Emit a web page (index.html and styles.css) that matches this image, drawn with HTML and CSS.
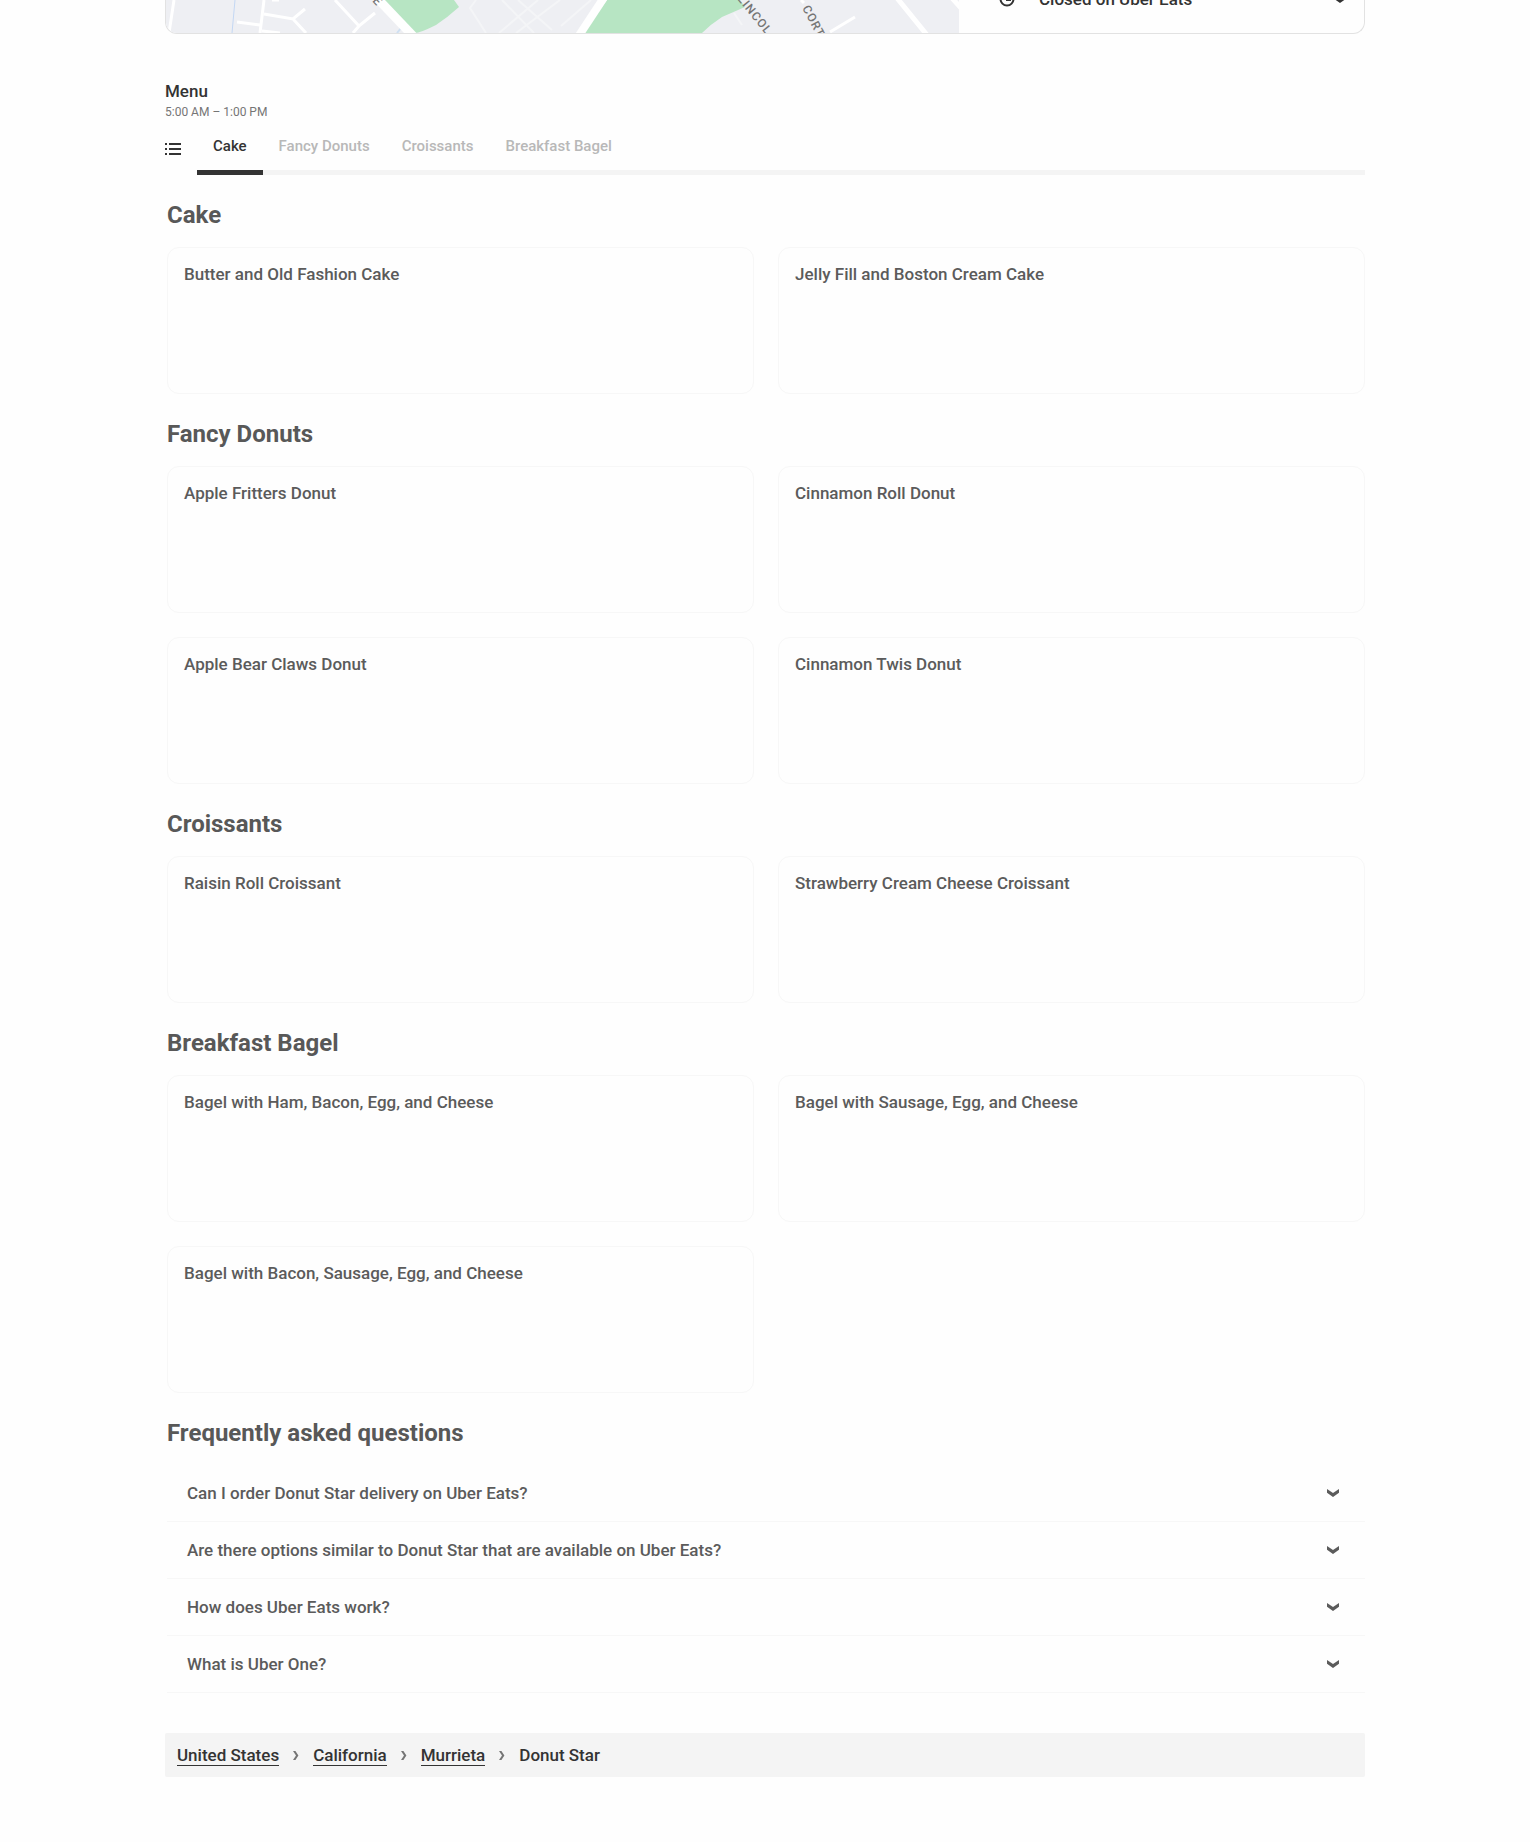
FILE: index.html
```html
<!DOCTYPE html>
<html lang="en">
  <head>
    <meta charset="utf-8">
    <meta name="viewport" content="width=device-width, initial-scale=1">
    <title>Donut Star</title>
    <link rel="stylesheet" href="styles.css">
  </head>
  <body>
    <!-- shared icons -->
    <svg class="sprite" width="0" height="0" aria-hidden="true">
      <symbol id="chevron-down" viewBox="0 0 12 8">
        <path d="M0 0 L6 4 L12 0 V3.8 L6 8 L0 3.8 Z" fill="currentColor" />
      </symbol>
      <symbol id="chevron-right" viewBox="0 0 6 9">
        <path d="M0 0 H2.4 L5.4 4.5 L2.4 9 H0 L3 4.5 Z" fill="currentColor" />
      </symbol>
    </svg>

    <main class="container">
      <section class="location">
        <svg class="map" viewBox="0 0 793 33" preserveAspectRatio="xMinYMax slice" role="img" aria-label="Map">
          <rect width="793" height="33" fill="#eeeff3" />
          <g fill="none" stroke="#f4f5f7" stroke-width="2">
            <path d="M310 0 L304 8 L320 33 M333 33 L372 0 M336 0 L368 33 M352 0 L386 30 M350 33 L394 0 M395 26 L425 0 M568 13 L576 25" />
          </g>
          <path d="M69 0 L66 33" stroke="#c3d7f3" stroke-width="1" />
          <path d="M217 0 L249 33 Q254 33 270 25 Q282 17 293 7 L288 0 Z" fill="#b7e5c3" />
          <path d="M441 0 L417 33 H536 Q545 24 556 17 L579 7 L574 0 Z" fill="#b7e5c3" />
          <path d="M231 33 L235 28" stroke="#cfe0f2" stroke-width="2" />
          <g fill="none" stroke="#ffffff" stroke-width="3">
            <path d="M8 0 L3 33 M98 0 L94 33 M98 14 L127 19 L139 9 M127 19 L140 33 M71 22 L94 25 M96 31 L114 33 M106 0 H113" />
            <path d="M169 0 L193 26 L209 13 M193 26 L187 33 M664 32 L689 17 M635 0 L638 3" />
            <path d="M731 -2 L761 35 M786 -2 L795 8" stroke-width="5" />
            <path d="M209 -4 L248 37" stroke-width="9" />
            <path d="M439 -4 L412 37" stroke-width="8" />
          </g>
          <g class="street">
            <text transform="translate(206 1) rotate(48)">E</text>
            <text transform="translate(571 -1) rotate(51)">LINCOL</text>
            <text transform="translate(636 8) rotate(62)">CORT</text>
          </g>
        </svg>
        <div class="hours">
          <svg class="clock" viewBox="0 0 16 16" fill="none" stroke="currentColor" stroke-width="2" aria-hidden="true">
            <circle cx="8" cy="8" r="6.5" />
            <path d="M8 4 V9 H12" />
          </svg>
          <span class="hours-text">Closed on Uber Eats</span>
          <svg class="chevron" aria-hidden="true"><use href="#chevron-down" /></svg>
        </div>
      </section>

      <header class="menu-header">
        <h1>Menu</h1>
        <p>5:00 AM – 1:00 PM</p>
      </header>

      <nav class="menu-nav" aria-label="Menu sections">
        <button class="list-button" type="button" aria-label="All sections">
          <svg viewBox="0 0 16 12" fill="currentColor" aria-hidden="true">
            <path d="M0 0h2v2H0zM4 0h12v2H4zM0 5h2v2H0zM4 5h12v2H4zM0 10h2v2H0zM4 10h12v2H4z" />
          </svg>
        </button>
        <div class="tabs">
          <button class="tab active" type="button">Cake</button>
          <button class="tab" type="button">Fancy Donuts</button>
          <button class="tab" type="button">Croissants</button>
          <button class="tab" type="button">Breakfast Bagel</button>
        </div>
      </nav>

      <section class="section">
        <h2>Cake</h2>
        <ul class="items">
          <li class="item">Butter and Old Fashion Cake</li>
          <li class="item">Jelly Fill and Boston Cream Cake</li>
        </ul>
      </section>

      <section class="section">
        <h2>Fancy Donuts</h2>
        <ul class="items">
          <li class="item">Apple Fritters Donut</li>
          <li class="item">Cinnamon Roll Donut</li>
          <li class="item">Apple Bear Claws Donut</li>
          <li class="item">Cinnamon Twis Donut</li>
        </ul>
      </section>

      <section class="section">
        <h2>Croissants</h2>
        <ul class="items">
          <li class="item">Raisin Roll Croissant</li>
          <li class="item">Strawberry Cream Cheese Croissant</li>
        </ul>
      </section>

      <section class="section">
        <h2>Breakfast Bagel</h2>
        <ul class="items">
          <li class="item">Bagel with Ham, Bacon, Egg, and Cheese</li>
          <li class="item">Bagel with Sausage, Egg, and Cheese</li>
          <li class="item">Bagel with Bacon, Sausage, Egg, and Cheese</li>
        </ul>
      </section>

      <section class="section">
        <h2>Frequently asked questions</h2>
        <div class="faq">
          <button class="question" type="button">
            Can I order Donut Star delivery on Uber Eats?
            <svg class="chevron" aria-hidden="true"><use href="#chevron-down" /></svg>
          </button>
          <button class="question" type="button">
            Are there options similar to Donut Star that are available on Uber Eats?
            <svg class="chevron" aria-hidden="true"><use href="#chevron-down" /></svg>
          </button>
          <button class="question" type="button">
            How does Uber Eats work?
            <svg class="chevron" aria-hidden="true"><use href="#chevron-down" /></svg>
          </button>
          <button class="question" type="button">
            What is Uber One?
            <svg class="chevron" aria-hidden="true"><use href="#chevron-down" /></svg>
          </button>
        </div>
      </section>

      <nav class="breadcrumb" aria-label="Breadcrumb">
        <a href="#">United States</a>
        <svg class="separator" aria-hidden="true"><use href="#chevron-right" /></svg>
        <a href="#">California</a>
        <svg class="separator" aria-hidden="true"><use href="#chevron-right" /></svg>
        <a href="#">Murrieta</a>
        <svg class="separator" aria-hidden="true"><use href="#chevron-right" /></svg>
        <span>Donut Star</span>
      </nav>
    </main>
  </body>
</html>
```

FILE: styles.css
```css
* {
  box-sizing: border-box;
}
body {
  margin: 0;
  background-color: #fefefe;
  color: #333333;
  font-family: Roboto, "Liberation Sans", sans-serif;
  font-size: 17px;
  font-weight: 500;
  line-height: 24px;
}
h1,
h2,
p,
ul {
  margin: 0;
  padding: 0;
}
button {
  border: none;
  background: none;
  color: inherit;
  font: inherit;
  cursor: pointer;
}
.sprite {
  position: absolute;
}
.container {
  max-width: 1248px;
  margin: 0 auto;
  padding: 0 24px 64px;
}

/* map and opening hours */
.location {
  display: grid;
  grid-template-columns: 1fr 405px;
  grid-template-rows: 33px;
  border: 1px solid #e2e2e2;
  border-top: none;
  border-radius: 0 0 12px 12px;
  overflow: hidden;
}
.map {
  display: block;
  width: 100%;
  height: 33px;
}
.street {
  fill: #757575;
  font-size: 12px;
  letter-spacing: 1px;
}
.hours {
  display: flex;
  align-items: center;
  align-self: end;
  gap: 24px;
  padding: 0 18px 22px 40px;
}
.hours-text {
  flex: 1;
}
.clock {
  width: 16px;
  height: 16px;
}
.chevron {
  flex: none;
  width: 12px;
  height: 8px;
}

/* menu title and tabs */
.menu-header {
  padding-top: 45px;
}
.menu-header h1 {
  font-size: 17px;
  font-weight: 500;
  line-height: 24px;
}
.menu-header p {
  color: #757575;
  font-size: 12px;
  font-weight: 400;
  line-height: 18px;
}
.menu-nav {
  display: flex;
  margin-top: 8px;
}
.list-button {
  width: 32px;
  padding: 0 16px 6px 0;
}
.list-button svg {
  display: block;
  width: 16px;
  height: 12px;
}
.tabs {
  display: flex;
  flex: 1;
  border-bottom: 5px solid #f4f4f4;
}
.tab {
  margin-bottom: -5px;
  padding: 7px 16px 14px;
  border-bottom: 5px solid transparent;
  color: #b8b8b8;
  font-size: 15px;
  line-height: 20px;
}
.tab.active {
  border-color: #333333;
  color: #333333;
}

/* menu sections */
.section {
  padding: 24px 0 0 2px;
}
.section h2 {
  color: #585858;
  font-size: 24px;
  font-weight: 700;
  line-height: 32px;
}
.items {
  display: grid;
  grid-template-columns: 1fr 1fr;
  gap: 24px;
  margin-top: 16px;
  list-style: none;
}
.item {
  min-height: 147px;
  padding: 14px 16px;
  border: 1px solid #f7f7f7;
  border-radius: 12px;
  color: #5b5b5b;
}

/* faq */
.faq {
  margin-top: 16px;
}
.question {
  display: flex;
  align-items: center;
  justify-content: space-between;
  width: 100%;
  padding: 16px 26px 16px 20px;
  border-bottom: 1px solid #f7f7f7;
  color: #5b5b5b;
  text-align: left;
}

/* breadcrumb */
.breadcrumb {
  display: flex;
  align-items: center;
  gap: 14px;
  margin-top: 40px;
  padding: 10px 12px;
  border-radius: 2px;
  background-color: #f4f4f4;
}
.breadcrumb a {
  color: inherit;
  line-height: 20px;
  text-decoration: none;
  border-bottom: 1px solid #333333;
}
.separator {
  width: 6px;
  height: 9px;
  color: #757575;
}
```
